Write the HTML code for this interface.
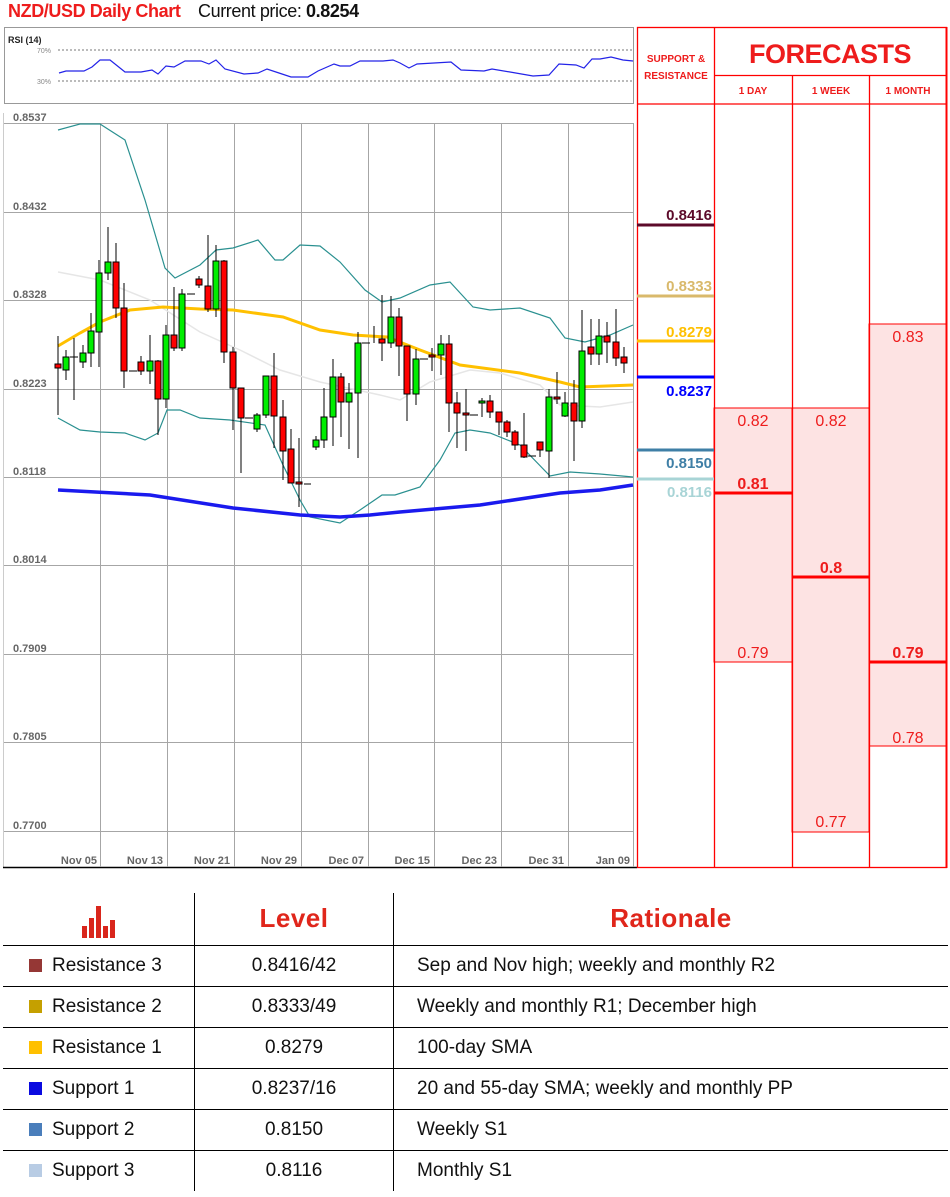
<!DOCTYPE html>
<html><head><meta charset="utf-8"><style>
body{margin:0;width:950px;height:1197px;background:#fff;overflow:hidden;font-family:"Liberation Sans",sans-serif;position:relative}
.t{position:absolute;font-family:"Liberation Sans",sans-serif}
table{position:absolute;left:3px;top:893px;border-collapse:collapse;width:945px}
td{height:40px;font-size:19px;color:#111;padding:0}
.sq{display:inline-block;width:13px;height:13px;margin:0 10px 0 26px;vertical-align:-1px}
</style></head><body>
<div class="t" style="left:8px;top:1px;font-size:18px;font-weight:bold;color:#ee1c1c;letter-spacing:-0.4px">NZD/USD Daily Chart</div>
<div class="t" style="left:198px;top:1px;font-size:18px;color:#111;letter-spacing:-0.4px">Current price: <b>0.8254</b></div>
<svg style="position:absolute;left:0;top:0" width="950" height="870" xmlns="http://www.w3.org/2000/svg">
<!-- RSI -->
<rect x="4.5" y="27.5" width="629" height="76" fill="#fff" stroke="#999"/>
<text x="8" y="43" font-family="Liberation Sans" font-size="9" font-weight="bold" fill="#222">RSI (14)</text>
<line x1="58" y1="50" x2="633" y2="50" stroke="#777" stroke-dasharray="2,2"/>
<line x1="58" y1="81" x2="633" y2="81" stroke="#777" stroke-dasharray="2,2"/>
<text x="37" y="53" font-family="Liberation Sans" font-size="7" fill="#888">70%</text>
<text x="37" y="84" font-family="Liberation Sans" font-size="7" fill="#888">30%</text>
<polyline fill="none" stroke="#2323e8" stroke-width="1.2" points="59,73 66,71 84,71 92,67 100,60 110,60 125,72 141,72 152,70 158,74 166,66 174,67 185,61 201,61 209,64 216,60 225,69 244,74 258,73 267,69 279,73 291,77 308,77 318,71 334,64 340,66 350,66 360,61 383,61 393,60 400,63 409,68 417,64 451,62 461,70 484,71 492,69 510,72 533,76 549,75 559,64 576,65 584,68 592,59 600,59 611,57 623,60 633,61"/>
<!-- main chart frame -->
<line x1="3.5" y1="113" x2="3.5" y2="868" stroke="#ccc"/>
<line x1="3" y1="867.5" x2="637" y2="867.5" stroke="#000" stroke-width="1.5"/>
<g stroke="#a6a6a6" stroke-width="1">
<line x1="4" y1="123.5" x2="633" y2="123.5"/><line x1="4" y1="212.5" x2="633" y2="212.5"/><line x1="4" y1="300.5" x2="633" y2="300.5"/><line x1="4" y1="389.5" x2="633" y2="389.5"/><line x1="4" y1="477.5" x2="633" y2="477.5"/><line x1="4" y1="565.5" x2="633" y2="565.5"/><line x1="4" y1="654.5" x2="633" y2="654.5"/><line x1="4" y1="742.5" x2="633" y2="742.5"/><line x1="4" y1="831.5" x2="633" y2="831.5"/>
<line x1="100.5" y1="123" x2="100.5" y2="867"/><line x1="167.5" y1="123" x2="167.5" y2="867"/><line x1="234.5" y1="123" x2="234.5" y2="867"/><line x1="301.5" y1="123" x2="301.5" y2="867"/><line x1="368.5" y1="123" x2="368.5" y2="867"/><line x1="434.5" y1="123" x2="434.5" y2="867"/><line x1="501.5" y1="123" x2="501.5" y2="867"/><line x1="568.5" y1="123" x2="568.5" y2="867"/><line x1="633.5" y1="123" x2="633.5" y2="867"/>
</g>
<g font-family="Liberation Sans" font-size="11" font-weight="bold" fill="#666">
<text x="13" y="121">0.8537</text><text x="13" y="210">0.8432</text><text x="13" y="298">0.8328</text><text x="13" y="387">0.8223</text><text x="13" y="475">0.8118</text><text x="13" y="563">0.8014</text><text x="13" y="652">0.7909</text><text x="13" y="740">0.7805</text><text x="13" y="829">0.7700</text>
</g>
<g font-family="Liberation Sans" font-size="11" font-weight="bold" fill="#666" text-anchor="end">
<text x="97" y="864">Nov 05</text><text x="163" y="864">Nov 13</text><text x="230" y="864">Nov 21</text><text x="297" y="864">Nov 29</text><text x="364" y="864">Dec 07</text><text x="430" y="864">Dec 15</text><text x="497" y="864">Dec 23</text><text x="564" y="864">Dec 31</text><text x="630" y="864">Jan 09</text>
</g>
<!-- lines -->
<polyline fill="none" stroke="#e6e6e6" stroke-width="1.5" points="58,272 100,280 150,300 200,332 240,350 280,370 320,382 380,395 400,400 430,382 470,370 500,373 540,385 560,405 600,407 633,402"/>
<polyline fill="none" stroke="#2a9090" stroke-width="1.2" points="58,130 80,124 100,124 125,140 145,200 165,268 175,278 200,265 216,250 233,248 258,240 275,260 283,260 300,245 320,246 340,262 365,290 382,302 400,298 430,285 450,282 473,307 490,310 520,308 550,318 565,338 585,342 610,335 633,325"/>
<polyline fill="none" stroke="#2a9090" stroke-width="1.2" points="58,418 80,430 100,432 125,433 145,440 158,433 167,410 180,410 200,418 230,420 265,425 283,465 300,500 310,517 340,523 360,510 382,495 395,495 420,487 440,460 455,433 470,430 490,433 520,445 550,476 570,472 600,474 633,477"/>
<polyline fill="none" stroke="#ffc000" stroke-width="3" points="58,346 80,333 100,322 130,310 163,307 200,309 233,310 283,317 320,330 353,335 387,337 420,350 460,365 520,373 560,382 580,387 633,385"/>
<polyline fill="none" stroke="#1a1aee" stroke-width="3.5" points="58,490 150,495 233,508 300,515 340,517 370,515 400,512 480,505 560,493 600,490 633,485"/>
<!-- candles -->
<g stroke="#000" stroke-width="1">
<line x1="58" y1="336" x2="58" y2="415"/><rect x="55" y="364" width="6" height="4" fill="#f00"/>
<line x1="66" y1="350" x2="66" y2="380"/><rect x="63" y="357" width="6" height="13" fill="#0e0"/>
<line x1="74" y1="338" x2="74" y2="400"/><line x1="70" y1="357" x2="78" y2="357"/>
<line x1="83" y1="345" x2="83" y2="368"/><rect x="80" y="353" width="6" height="9" fill="#0e0"/>
<line x1="91" y1="313" x2="91" y2="367"/><rect x="88" y="331" width="6" height="22" fill="#0e0"/>
<line x1="99" y1="260" x2="99" y2="367"/><rect x="96" y="273" width="6" height="59" fill="#0e0"/>
<line x1="108" y1="227" x2="108" y2="280"/><rect x="105" y="262" width="6" height="11" fill="#0e0"/>
<line x1="116" y1="243" x2="116" y2="318"/><rect x="113" y="262" width="6" height="46" fill="#f00"/>
<line x1="124" y1="283" x2="124" y2="388"/><rect x="121" y="308" width="6" height="63" fill="#f00"/>
<line x1="129" y1="371" x2="137" y2="371"/>
<line x1="141" y1="356" x2="141" y2="375"/><rect x="138" y="362" width="6" height="9" fill="#f00"/>
<line x1="150" y1="335" x2="150" y2="384"/><rect x="147" y="361" width="6" height="10" fill="#0e0"/>
<line x1="158" y1="360" x2="158" y2="435"/><rect x="155" y="361" width="6" height="38" fill="#f00"/>
<line x1="166" y1="325" x2="166" y2="408"/><rect x="163" y="335" width="6" height="64" fill="#0e0"/>
<line x1="174" y1="287" x2="174" y2="351"/><rect x="171" y="335" width="6" height="13" fill="#f00"/>
<line x1="182" y1="289" x2="182" y2="351"/><rect x="179" y="294" width="6" height="54" fill="#0e0"/>
<line x1="187" y1="294" x2="195" y2="294"/>
<line x1="199" y1="276" x2="199" y2="288"/><rect x="196" y="279" width="6" height="6" fill="#f00"/>
<line x1="208" y1="235" x2="208" y2="312"/><rect x="205" y="286" width="6" height="23" fill="#f00"/>
<line x1="216" y1="245" x2="216" y2="317"/><rect x="213" y="261" width="6" height="48" fill="#0e0"/>
<line x1="224" y1="260" x2="224" y2="363"/><rect x="221" y="261" width="6" height="91" fill="#f00"/>
<line x1="233" y1="347" x2="233" y2="430"/><rect x="230" y="352" width="6" height="36" fill="#f00"/>
<line x1="241" y1="388" x2="241" y2="473"/><rect x="238" y="388" width="6" height="30" fill="#f00"/>
<line x1="245" y1="418" x2="253" y2="418"/>
<line x1="257" y1="413" x2="257" y2="432"/><rect x="254" y="415" width="6" height="14" fill="#0e0"/>
<line x1="266" y1="376" x2="266" y2="418"/><rect x="263" y="376" width="6" height="39" fill="#0e0"/>
<line x1="274" y1="353" x2="274" y2="448"/><rect x="271" y="376" width="6" height="40" fill="#f00"/>
<line x1="283" y1="400" x2="283" y2="480"/><rect x="280" y="417" width="6" height="34" fill="#f00"/>
<line x1="291" y1="429" x2="291" y2="483"/><rect x="288" y="449" width="6" height="34" fill="#f00"/>
<line x1="299" y1="438" x2="299" y2="507"/><rect x="296" y="482" width="6" height="2" fill="#f00"/>
<line x1="304" y1="484" x2="311" y2="484"/>
<line x1="316" y1="436" x2="316" y2="450"/><rect x="313" y="440" width="6" height="7" fill="#0e0"/>
<line x1="324" y1="388" x2="324" y2="448"/><rect x="321" y="417" width="6" height="23" fill="#0e0"/>
<line x1="333" y1="359" x2="333" y2="446"/><rect x="330" y="377" width="6" height="40" fill="#0e0"/>
<line x1="341" y1="373" x2="341" y2="437"/><rect x="338" y="377" width="6" height="25" fill="#f00"/>
<line x1="349" y1="383" x2="349" y2="449"/><rect x="346" y="393" width="6" height="9" fill="#0e0"/>
<line x1="358" y1="332" x2="358" y2="458"/><rect x="355" y="343" width="6" height="50" fill="#0e0"/>
<line x1="362" y1="343" x2="370" y2="343"/>
<line x1="374" y1="326" x2="374" y2="343"/>
<line x1="382" y1="295" x2="382" y2="361"/><rect x="379" y="339" width="6" height="4" fill="#f00"/>
<line x1="391" y1="296" x2="391" y2="348"/><rect x="388" y="317" width="6" height="26" fill="#0e0"/>
<line x1="399" y1="308" x2="399" y2="376"/><rect x="396" y="317" width="6" height="29" fill="#f00"/>
<line x1="407" y1="346" x2="407" y2="421"/><rect x="404" y="346" width="6" height="48" fill="#f00"/>
<line x1="416" y1="349" x2="416" y2="405"/><rect x="413" y="359" width="6" height="35" fill="#0e0"/>
<line x1="420" y1="359" x2="428" y2="359"/>
<line x1="432" y1="348" x2="432" y2="371"/><rect x="429" y="355" width="6" height="2" fill="#f00"/>
<line x1="441" y1="335" x2="441" y2="375"/><rect x="438" y="344" width="6" height="11" fill="#0e0"/>
<line x1="449" y1="335" x2="449" y2="432"/><rect x="446" y="344" width="6" height="59" fill="#f00"/>
<line x1="457" y1="392" x2="457" y2="448"/><rect x="454" y="403" width="6" height="10" fill="#f00"/>
<line x1="466" y1="389" x2="466" y2="451"/><rect x="463" y="413" width="6" height="2" fill="#f00"/>
<line x1="470" y1="415" x2="478" y2="415"/>
<line x1="482" y1="398" x2="482" y2="417"/><rect x="479" y="401" width="6" height="2" fill="#0e0"/>
<line x1="490" y1="395" x2="490" y2="418"/><rect x="487" y="401" width="6" height="11" fill="#f00"/>
<line x1="499" y1="412" x2="499" y2="435"/><rect x="496" y="412" width="6" height="10" fill="#f00"/>
<line x1="507" y1="420" x2="507" y2="437"/><rect x="504" y="422" width="6" height="10" fill="#f00"/>
<line x1="515" y1="430" x2="515" y2="450"/><rect x="512" y="432" width="6" height="13" fill="#f00"/>
<line x1="524" y1="413" x2="524" y2="458"/><rect x="521" y="445" width="6" height="12" fill="#f00"/>
<line x1="528" y1="456" x2="536" y2="456"/>
<line x1="540" y1="442" x2="540" y2="457"/><rect x="537" y="442" width="6" height="8" fill="#f00"/>
<line x1="549" y1="389" x2="549" y2="478"/><rect x="546" y="397" width="6" height="54" fill="#0e0"/>
<line x1="557" y1="372" x2="557" y2="404"/><rect x="554" y="397" width="6" height="2" fill="#f00"/>
<line x1="565" y1="392" x2="565" y2="417"/><rect x="562" y="403" width="6" height="13" fill="#0e0"/>
<line x1="574" y1="380" x2="574" y2="461"/><rect x="571" y="403" width="6" height="18" fill="#f00"/>
<line x1="582" y1="310" x2="582" y2="428"/><rect x="579" y="351" width="6" height="70" fill="#0e0"/>
<line x1="591" y1="319" x2="591" y2="365"/><rect x="588" y="347" width="6" height="7" fill="#f00"/>
<line x1="599" y1="319" x2="599" y2="365"/><rect x="596" y="336" width="6" height="18" fill="#0e0"/>
<line x1="607" y1="322" x2="607" y2="363"/><rect x="604" y="336" width="6" height="6" fill="#f00"/>
<line x1="616" y1="309" x2="616" y2="366"/><rect x="613" y="342" width="6" height="16" fill="#f00"/>
<line x1="624" y1="347" x2="624" y2="373"/><rect x="621" y="357" width="6" height="6" fill="#f00"/>
</g>
<!-- forecast panel -->
<rect x="714" y="408" width="78" height="254" fill="#fde3e3" stroke="#f00" stroke-width="1"/>
<rect x="792" y="408" width="77" height="424" fill="#fde3e3" stroke="#f00" stroke-width="1"/>
<rect x="869" y="324" width="78" height="422" fill="#fde3e3" stroke="#f00" stroke-width="1"/>
<g stroke="#f00" stroke-width="1.3" fill="none">
<rect x="637.5" y="27.5" width="309" height="840"/>
<line x1="714.5" y1="27" x2="714.5" y2="868"/>
<line x1="792.5" y1="75" x2="792.5" y2="868"/>
<line x1="869.5" y1="75" x2="869.5" y2="868"/>
<line x1="714" y1="75.5" x2="947" y2="75.5"/>
<line x1="637" y1="104" x2="947" y2="104"/>
</g>
<line x1="946.5" y1="27" x2="946.5" y2="868" stroke="#f00" stroke-width="2"/>
<g font-family="Liberation Sans" font-weight="bold" fill="#ee1c1c" text-anchor="middle">
<text x="676" y="62" font-size="10">SUPPORT &amp;</text>
<text x="676" y="79" font-size="10">RESISTANCE</text>
<text x="830" y="63" font-size="27" letter-spacing="-0.5">FORECASTS</text>
<text x="753" y="94" font-size="10">1 DAY</text>
<text x="831" y="94" font-size="10">1 WEEK</text>
<text x="908" y="94" font-size="10">1 MONTH</text>
</g>
<g stroke-width="3">
<line x1="637" y1="225" x2="714" y2="225" stroke="#5c0a2a"/>
<line x1="637" y1="296" x2="714" y2="296" stroke="#d9b96b"/>
<line x1="637" y1="341" x2="714" y2="341" stroke="#ffc000"/>
<line x1="637" y1="377" x2="714" y2="377" stroke="#0000ff"/>
<line x1="637" y1="450" x2="714" y2="450" stroke="#3f7fa6"/>
<line x1="637" y1="479" x2="714" y2="479" stroke="#a8d4d6"/>
<line x1="714" y1="493" x2="792" y2="493" stroke="#f00"/>
<line x1="792" y1="577" x2="869" y2="577" stroke="#f00"/>
<line x1="869" y1="662" x2="947" y2="662" stroke="#f00"/>
</g>
<g font-family="Liberation Sans" font-weight="bold" font-size="15" text-anchor="end">
<text x="712" y="220" fill="#5c0a2a">0.8416</text>
<text x="712" y="291" fill="#d9b96b">0.8333</text>
<text x="712" y="337" fill="#ffc000">0.8279</text>
<text x="712" y="396" fill="#0000ff">0.8237</text>
<text x="712" y="468" fill="#3f7fa6">0.8150</text>
<text x="712" y="497" fill="#a8d4d6">0.8116</text>
</g>
<g font-family="Liberation Sans" font-size="16" fill="#ee1c1c" text-anchor="middle">
<text x="753" y="426">0.82</text>
<text x="831" y="426">0.82</text>
<text x="908" y="342">0.83</text>
<text x="753" y="489" font-weight="bold">0.81</text>
<text x="831" y="573" font-weight="bold">0.8</text>
<text x="908" y="658" font-weight="bold">0.79</text>
<text x="753" y="658">0.79</text>
<text x="831" y="827">0.77</text>
<text x="908" y="743">0.78</text>
</g>
</svg>
<table>
<tr style="height:52px"><td style="width:191px;text-align:center;border-right:1px solid #000;border-bottom:1.5px solid #000">
<svg width="36" height="38" style="vertical-align:middle;margin-top:4px"><g fill="#d9261c"><rect x="1" y="24" width="5" height="12"/><rect x="8" y="16" width="5" height="20"/><rect x="15" y="4" width="5" height="32"/><rect x="22" y="24" width="5" height="12"/><rect x="29" y="18" width="5" height="18"/></g></svg></td>
<td style="width:198px;text-align:center;border-right:1px solid #000;border-bottom:1.5px solid #000;font-size:26px;font-weight:bold;color:#e0261b;letter-spacing:0.5px">Level</td>
<td style="text-align:center;border-bottom:1.5px solid #000;font-size:26px;font-weight:bold;color:#e0261b;letter-spacing:0.5px">Rationale</td></tr>
<tr><td style="border-right:1px solid #000;border-bottom:1.5px solid #000"><span class="sq" style="background:#953735"></span>Resistance 3</td><td style="text-align:center;border-right:1px solid #000;border-bottom:1.5px solid #000">0.8416/42</td><td style="padding-left:23px;border-bottom:1.5px solid #000">Sep and Nov high; weekly and monthly R2</td></tr>
<tr><td style="border-right:1px solid #000;border-bottom:1.5px solid #000"><span class="sq" style="background:#c5a000"></span>Resistance 2</td><td style="text-align:center;border-right:1px solid #000;border-bottom:1.5px solid #000">0.8333/49</td><td style="padding-left:23px;border-bottom:1.5px solid #000">Weekly and monthly R1; December high</td></tr>
<tr><td style="border-right:1px solid #000;border-bottom:1.5px solid #000"><span class="sq" style="background:#ffc000"></span>Resistance 1</td><td style="text-align:center;border-right:1px solid #000;border-bottom:1.5px solid #000">0.8279</td><td style="padding-left:23px;border-bottom:1.5px solid #000">100-day SMA</td></tr>
<tr><td style="border-right:1px solid #000;border-bottom:1.5px solid #000"><span class="sq" style="background:#0a0ae0"></span>Support 1</td><td style="text-align:center;border-right:1px solid #000;border-bottom:1.5px solid #000">0.8237/16</td><td style="padding-left:23px;border-bottom:1.5px solid #000">20 and 55-day SMA; weekly and monthly PP</td></tr>
<tr><td style="border-right:1px solid #000;border-bottom:1.5px solid #000"><span class="sq" style="background:#4a7ebb"></span>Support 2</td><td style="text-align:center;border-right:1px solid #000;border-bottom:1.5px solid #000">0.8150</td><td style="padding-left:23px;border-bottom:1.5px solid #000">Weekly S1</td></tr>
<tr><td style="border-right:1px solid #000"><span class="sq" style="background:#b8cce4"></span>Support 3</td><td style="text-align:center;border-right:1px solid #000">0.8116</td><td style="padding-left:23px">Monthly S1</td></tr>
</table>
</body></html>
